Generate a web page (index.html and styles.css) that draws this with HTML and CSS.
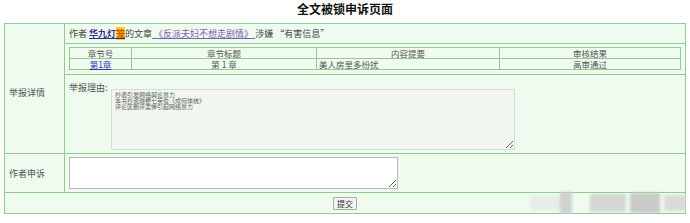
FILE: index.html
```html
<!DOCTYPE html>
<html lang="zh-CN">
<head>
  <meta charset="UTF-8" />
  <title>全文被锁申诉页面</title>
  <link rel="stylesheet" href="styles.css">
</head>
<body>
  <h1 class="page-title">全文被锁申诉页面</h1>

  <form class="appeal">
    <table class="appeal-table">
      <tr class="row-info">
        <td class="label label-detail" rowspan="3">举报详情</td>
        <td class="info">
          作者 <a href="#" class="author">华九灯<mark>笼</mark></a>的文章<a href="#" class="novel"> 《反派夫妇不想走剧情》 </a>涉嫌 “有害信息”
        </td>
      </tr>
      <tr class="row-chapters">
        <td class="chapters-cell">
          <table class="chapters">
            <tr>
              <th class="c-num">章节号</th>
              <th class="c-title">章节标题</th>
              <th class="c-summary">内容提要</th>
              <th class="c-result">审核结果</th>
            </tr>
            <tr>
              <td class="center"><a href="#" class="chapter-link">第1章</a></td>
              <td class="center">第 1 章</td>
              <td>美人房里多纷扰</td>
              <td class="center">高审通过</td>
            </tr>
          </table>
        </td>
      </tr>
      <tr class="row-reason">
        <td class="reason-cell">
          <div class="reason">
            <span class="reason-label">举报理由:</span>
            <textarea class="reason-text" readonly>抄袭引发网络舆论暴力
本书抄袭融梗七英俊《成何体统》
评论区删评卖惨引起网络暴力</textarea>
          </div>
        </td>
      </tr>
      <tr class="row-appeal">
        <td class="label">作者申诉</td>
        <td class="appeal-cell"><textarea class="appeal-text"></textarea></td>
      </tr>
      <tr class="row-submit">
        <td colspan="2" class="submit-row"><button type="button" class="submit">提交</button></td>
      </tr>
    </table>
  </form>

  <div class="watermark">
    <span class="wm wm1"></span>
    <span class="wm wm2"></span>
    <span class="wm wm3"></span>
    <span class="wm wm4"></span>
    <span class="wm wm5"></span>
  </div>
</body>
</html>
```

FILE: styles.css
```css
body {
  margin: 0 4px;
  background: #fff;
  color: #444;
  font-family: "Noto Sans CJK SC", "DejaVu Sans", sans-serif;
  font-size: 9px;
  line-height: 11px;
  position: relative;
}

.page-title {
  margin: 2px 0 7px;
  text-align: center;
  font-size: 12px;
  line-height: 14px;
  color: #111;
}

.appeal {
  margin: 0;
}

.appeal-table {
  width: 682px;
  border-collapse: collapse;
  background: #eefbee;
}

.appeal-table > tbody > tr > td {
  border: 1px solid #93c993;
  padding: 0 4px;
}

.row-info { height: 20px; }
.row-chapters { height: 31px; }
.row-reason { height: 79px; }
.row-appeal { height: 39px; }
.row-submit { height: 21px; }

.label {
  width: 51px;
  color: #555;
  vertical-align: middle;
}

.appeal-table > tbody > tr > td.label-detail {
  padding-top: 8px;
}

.author {
  color: #3b2d8f;
  font-weight: bold;
}

.author mark {
  background: #ffcc22;
  color: #c05000;
}

.novel {
  color: #7d62b4;
}

.chapters-cell {
  vertical-align: top;
}

.chapters {
  width: 100%;
  margin: 3px 0 0;
  border-collapse: collapse;
}

.chapters th,
.chapters td {
  border: 1px solid #93c993;
  font-weight: normal;
  font-size: 8.5px;
  line-height: 10px;
  height: 10px;
  padding: 0 2px;
  color: #555;
}

.c-num { width: 57px; }
.c-title { width: 180px; }
.c-summary { width: 178px; }

.center {
  text-align: center;
}

.chapter-link {
  color: #2a37a8;
}

.reason-cell {
  vertical-align: top;
}

.reason {
  display: flex;
  align-items: flex-start;
  padding-top: 8px;
}

.reason-label {
  width: 42px;
  color: #555;
  line-height: 10px;
}

.reason-text {
  width: 396px;
  height: 57px;
  margin: 6px 0 0;
  padding: 2px 3px 0;
  border: 1px solid #d6dcd6;
  background: #f1f6f1;
  color: #5f655f;
  font-family: inherit;
  font-size: 6px;
  line-height: 6px;
  resize: both;
}

.appeal-text {
  display: block;
  width: 323px;
  height: 26px;
  margin: 0;
  padding: 2px;
  border: 1px solid #b8bcb8;
  background: #fff;
  font-family: inherit;
}

.submit-row {
  text-align: center;
}

.submit {
  font-family: inherit;
  font-size: 8px;
  line-height: 9px;
  padding: 1px 3px;
  border: 1px solid #aaa;
  background: #f3f3f3;
  color: #333;
  border-radius: 1px;
  vertical-align: middle;
}

.watermark {
  position: absolute;
  left: 526px;
  top: 190px;
  width: 160px;
  height: 26px;
  filter: blur(1.5px);
}

.wm {
  position: absolute;
  background: #d3d6d3;
}

.wm1 { left: 0; top: 6px; width: 40px; height: 14px; background: #e6ece6; }
.wm2 { left: 30px; top: 2px; width: 12px; height: 22px; background: #cfd2cf; }
.wm3 { left: 60px; top: 4px; width: 36px; height: 18px; }
.wm4 { left: 100px; top: 3px; width: 30px; height: 20px; background: #c8cbc8; }
.wm5 { left: 134px; top: 5px; width: 22px; height: 16px; background: #d8dbd8; }
```
